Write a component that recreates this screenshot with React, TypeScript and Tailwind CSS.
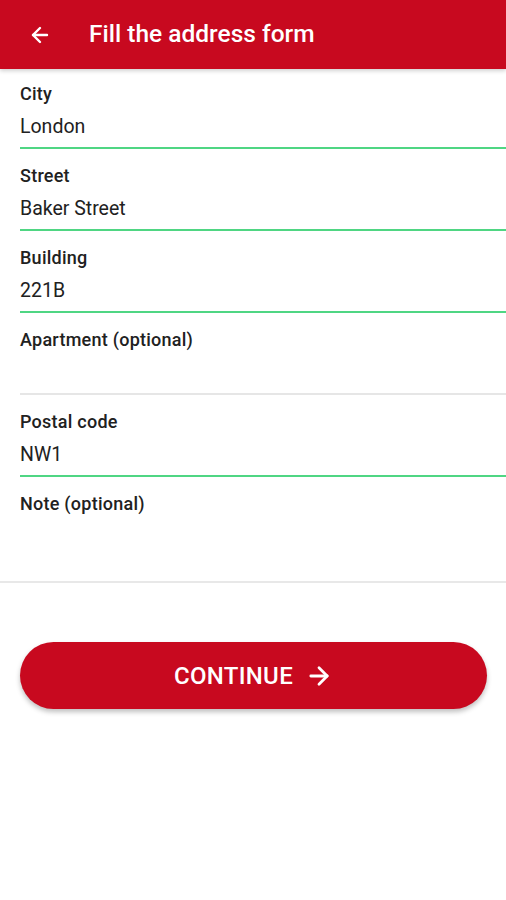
import { ArrowLeft, ArrowRight } from 'lucide-react';

interface Field {
  label: string;
  value: string;
  active: boolean;
}

const fields: Field[] = [
  { label: 'City', value: 'London', active: true },
  { label: 'Street', value: 'Baker Street', active: true },
  { label: 'Building', value: '221B', active: true },
  { label: 'Apartment (optional)', value: '', active: false },
  { label: 'Postal code', value: 'NW1', active: true },
];

export default function App() {
  return (
    <div className="min-h-[900px] w-full bg-white font-['Roboto','Liberation_Sans',sans-serif] text-[#212121]">
      {/* Toolbar */}
      <header className="relative z-10 flex h-[69px] items-center bg-[#c8091f] shadow-[0_2px_4px_rgba(0,0,0,0.18)]">
        <button className="ml-[28px] flex h-6 w-6 items-center justify-center text-white">
          <ArrowLeft size={24} strokeWidth={2.4} />
        </button>
        <h1 className="ml-[37px] text-[24.5px] font-medium text-white">Fill the address form</h1>
      </header>

      {/* Form */}
      <div className="-mt-[2px]">
        {fields.map((f) => (
          <div key={f.label} className="pl-[20px]">
            <div className="pt-[17px] text-[18px] leading-[20px] font-medium tracking-[0.25px]">{f.label}</div>
            <div className="mt-[11px] h-[24px] text-[19.5px] leading-[24px]">{f.value}</div>
            <div
              className={
                f.active ? 'mt-[8px] h-[2px] bg-[#4fd683]' : 'mt-[8px] h-[2px] bg-[#e6e6e6]'
              }
            />
          </div>
        ))}

        <div>
          <div className="pl-[20px] pt-[17px] text-[18px] leading-[20px] font-medium tracking-[0.25px]">
            Note (optional)
          </div>
          <div className="h-[67px]" />
          <div className="h-[2px] bg-[#e8e8e8]" />
        </div>
      </div>

      {/* Continue */}
      <div className="px-[20px] pt-[59px] pr-[19px]">
        <button className="flex h-[67px] w-full items-center justify-center gap-[12px] rounded-full bg-[#c8091f] text-white shadow-[0_3px_5px_rgba(0,0,0,0.25)]">
          <span className="text-[24px] font-medium tracking-[0.3px]">CONTINUE</span>
          <ArrowRight size={28} strokeWidth={2.4} />
        </button>
      </div>
    </div>
  );
}
